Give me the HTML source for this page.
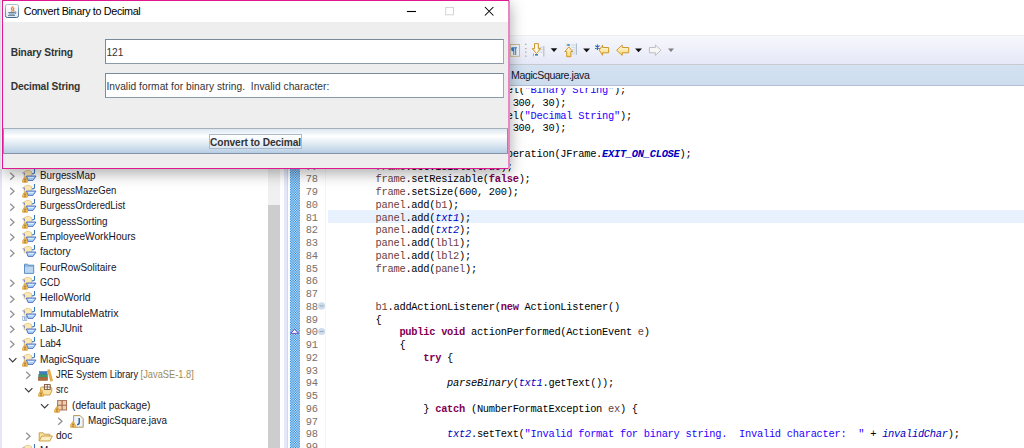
<!DOCTYPE html>
<html lang="en"><head><meta charset="utf-8"><title>Convert Binary to Decimal</title>
<style>
html,body{margin:0;padding:0}
body{width:1024px;height:448px;overflow:hidden;position:relative;background:#fff;font-family:"Liberation Sans",sans-serif}
.abs{position:absolute}
#left{position:absolute;left:0;top:0;width:281px;height:448px;background:#fff;overflow:hidden}
#leftedge{position:absolute;left:0;top:0;width:1.5px;height:448px;background:#e4e6f6}
.tr{position:absolute;font-size:10.6px;line-height:15px;height:15px;color:#141428;white-space:nowrap;letter-spacing:0;transform-origin:0 0}
.dec{color:#9a8a5a}
.ch,.ic{position:absolute}
#sbtrack{position:absolute;left:268px;top:0;width:12px;height:448px;background:#f0f0f0}
#sbthumb{position:absolute;left:268px;top:205px;width:12px;height:243px;background:#cdcdcd}
#sash{position:absolute;left:283.5px;top:0;width:3.8px;height:448px;background:#e4e8f8;border-right:0.7px solid #d8d8dc}
#ruler{position:absolute;left:289.7px;top:86px;width:10.3px;height:362px;background:#5b9bd8;
  background-image:conic-gradient(#eef6fd 25%, #0a7ad8 0 50%, #eef6fd 0 75%, #0a7ad8 0);background-size:1.7px 1.7px}
#rulerline{position:absolute;left:325px;top:86px;width:1px;height:362px;background:#f6f6f6}
.ln{position:absolute;left:299.3px;width:18.4px;text-align:right;font-family:"Liberation Mono",monospace;font-size:10.4px;letter-spacing:-0.24px;line-height:12.75px;height:12.75px;color:#7a7068;white-space:pre}
.cl{position:absolute;left:327.9px;font-family:"Liberation Mono",monospace;font-size:10.4px;letter-spacing:-0.276px;line-height:12.75px;height:12.75px;color:#000;white-space:pre}
.k{color:#7f0055;font-weight:bold}
.l{color:#6a3e3e}
.f{color:#0000c0;font-style:italic}
.sf{color:#0000c0;font-style:italic;font-weight:bold}
.sm{font-style:italic}
.s{color:#2a00ff}
#curline{position:absolute;left:328px;top:210.3px;width:696px;height:12.8px;background:#e8f2fe}
#toolbar{position:absolute;left:284px;top:35px;width:740px;height:29.5px;background:linear-gradient(#f7f8fd,#e4e7f7);border-top:1px solid #efefef;box-sizing:border-box}
#tabbar{position:absolute;left:284px;top:64px;width:740px;height:22px;background:linear-gradient(#d3e1f1,#cedded);border-top:1px solid #c9c9d2;border-bottom:1px solid #b3bfd9;box-sizing:border-box}
#tabtxt{position:absolute;left:511px;top:67.5px;font-size:10.6px;line-height:15px;color:#141428;letter-spacing:-0.4px;white-space:nowrap}
#dlg{position:absolute;left:1.6px;top:-0.3px;width:505.8px;height:166.8px;border:1.2px solid #e0188f;background:#eeeeee;box-shadow:1px 3.5px 14px rgba(0,0,0,0.34)}
#dl{position:absolute;left:0;top:0;width:0;height:0}
#ttl{position:absolute;left:2.8px;top:0.9px;width:505.2px;height:21.1px;background:#fff}
#ttltxt{position:absolute;left:23.7px;top:4.4px;font-size:10.8px;line-height:15px;color:#000;letter-spacing:-0.35px;white-space:nowrap}
.lbl{position:absolute;left:10.7px;font-weight:bold;font-size:10.2px;line-height:14px;color:#333;white-space:nowrap;letter-spacing:-0.13px}
.tf{position:absolute;left:104.8px;width:396.8px;height:23px;border:1px solid #7a8a99;border-right-color:#9aa8b6;border-bottom-color:#8c9aa8;background:#fff;font-size:10.2px;line-height:26.4px;color:#333;white-space:nowrap;padding-left:0.6px;overflow:hidden;letter-spacing:0.05px}
#btn{position:absolute;left:2.8px;top:128.1px;width:505.4px;height:25.6px;border:1px solid #8494a4;border-top:1.4px solid #a6b0bb;box-sizing:border-box;
 background:linear-gradient(#dde7f1 0%,#ffffff 30%,#e4edf5 58%,#b8cee4 100%)}
#btntxt{position:absolute;left:209px;top:134.2px;width:92.6px;height:14.4px;border:1px solid #a9bbcd;box-sizing:border-box;font-weight:bold;font-size:10.2px;line-height:15.6px;color:#333;text-align:center;white-space:nowrap;letter-spacing:-0.1px;background:rgba(255,255,255,0.25)}
</style></head><body>
<div id="left">
<svg class="ch" style="left:9.0px;top:172.05px" width="7" height="9" viewBox="0 0 7 9"><path d="M1.2 0.8 L5 4.3 L1.2 7.8" fill="none" stroke="#919191" stroke-width="1.3"/></svg>
<svg class="ic" style="left:22.0px;top:168.85px" width="15" height="14" viewBox="0 0 15 14"><path d="M2.2 7.8 v-5 q0 -0.6 0.8 -0.6 h0.6 l0.5 -0.8 h3.4 l0.5 0.8 h1 q0.6 0 0.6 0.6 v5z" fill="#fbe9b4" stroke="#e2c078" stroke-width="0.7"/><path d="M0.4 3.9 h2 v2.4" fill="none" stroke="#6a78c0" stroke-width="0.8"/><path d="M4.4 7 h9.6 l-3 4.4 h-5z" fill="#a9d2f8" stroke="#4a68c0" stroke-width="0.9" stroke-linejoin="round"/><path d="M6.2 8.6 h5.6" stroke="#e8f4ff" stroke-width="0.9"/><path d="M12.5 -0.2 v3.6 q0 1.6 -2.6 1.5" fill="none" stroke="#3a78b8" stroke-width="1.1"/><path d="M3 7.6 Q3.8 7.6 5.6 11.6 Q6.4 13.4 4.6 13.4 H1.4 Q-0.4 13.4 0.4 11.6 Q2.2 7.6 3 7.6 Z" fill="#f0bc5c" stroke="#d8982c" stroke-width="0.6"/><rect x="2.6" y="9.6" width="0.8" height="1.9" fill="#5a3a00"/><rect x="2.6" y="12" width="0.8" height="0.8" fill="#5a3a00"/></svg>
<div class="tr" style="left:40.2px;top:167.85px;transform:scaleX(0.9330)">BurgessMap</div>
<svg class="ch" style="left:9.0px;top:187.36px" width="7" height="9" viewBox="0 0 7 9"><path d="M1.2 0.8 L5 4.3 L1.2 7.8" fill="none" stroke="#919191" stroke-width="1.3"/></svg>
<svg class="ic" style="left:22.0px;top:184.16px" width="15" height="14" viewBox="0 0 15 14"><path d="M2.2 7.8 v-5 q0 -0.6 0.8 -0.6 h0.6 l0.5 -0.8 h3.4 l0.5 0.8 h1 q0.6 0 0.6 0.6 v5z" fill="#fbe9b4" stroke="#e2c078" stroke-width="0.7"/><path d="M0.4 3.9 h2 v2.4" fill="none" stroke="#6a78c0" stroke-width="0.8"/><path d="M4.4 7 h9.6 l-3 4.4 h-5z" fill="#a9d2f8" stroke="#4a68c0" stroke-width="0.9" stroke-linejoin="round"/><path d="M6.2 8.6 h5.6" stroke="#e8f4ff" stroke-width="0.9"/><path d="M12.5 -0.2 v3.6 q0 1.6 -2.6 1.5" fill="none" stroke="#3a78b8" stroke-width="1.1"/><path d="M3 7.6 Q3.8 7.6 5.6 11.6 Q6.4 13.4 4.6 13.4 H1.4 Q-0.4 13.4 0.4 11.6 Q2.2 7.6 3 7.6 Z" fill="#f0bc5c" stroke="#d8982c" stroke-width="0.6"/><rect x="2.6" y="9.6" width="0.8" height="1.9" fill="#5a3a00"/><rect x="2.6" y="12" width="0.8" height="0.8" fill="#5a3a00"/></svg>
<div class="tr" style="left:40.2px;top:183.16px;transform:scaleX(0.9000)">BurgessMazeGen</div>
<svg class="ch" style="left:9.0px;top:202.67px" width="7" height="9" viewBox="0 0 7 9"><path d="M1.2 0.8 L5 4.3 L1.2 7.8" fill="none" stroke="#919191" stroke-width="1.3"/></svg>
<svg class="ic" style="left:22.0px;top:199.47px" width="15" height="14" viewBox="0 0 15 14"><path d="M2.2 7.8 v-5 q0 -0.6 0.8 -0.6 h0.6 l0.5 -0.8 h3.4 l0.5 0.8 h1 q0.6 0 0.6 0.6 v5z" fill="#fbe9b4" stroke="#e2c078" stroke-width="0.7"/><path d="M0.4 3.9 h2 v2.4" fill="none" stroke="#6a78c0" stroke-width="0.8"/><path d="M4.4 7 h9.6 l-3 4.4 h-5z" fill="#a9d2f8" stroke="#4a68c0" stroke-width="0.9" stroke-linejoin="round"/><path d="M6.2 8.6 h5.6" stroke="#e8f4ff" stroke-width="0.9"/><path d="M12.5 -0.2 v3.6 q0 1.6 -2.6 1.5" fill="none" stroke="#3a78b8" stroke-width="1.1"/><path d="M3 7.6 Q3.8 7.6 5.6 11.6 Q6.4 13.4 4.6 13.4 H1.4 Q-0.4 13.4 0.4 11.6 Q2.2 7.6 3 7.6 Z" fill="#f0bc5c" stroke="#d8982c" stroke-width="0.6"/><rect x="2.6" y="9.6" width="0.8" height="1.9" fill="#5a3a00"/><rect x="2.6" y="12" width="0.8" height="0.8" fill="#5a3a00"/></svg>
<div class="tr" style="left:40.2px;top:198.47px;transform:scaleX(0.9043)">BurgessOrderedList</div>
<svg class="ch" style="left:9.0px;top:217.98px" width="7" height="9" viewBox="0 0 7 9"><path d="M1.2 0.8 L5 4.3 L1.2 7.8" fill="none" stroke="#919191" stroke-width="1.3"/></svg>
<svg class="ic" style="left:22.0px;top:214.78px" width="15" height="14" viewBox="0 0 15 14"><path d="M2.2 7.8 v-5 q0 -0.6 0.8 -0.6 h0.6 l0.5 -0.8 h3.4 l0.5 0.8 h1 q0.6 0 0.6 0.6 v5z" fill="#fbe9b4" stroke="#e2c078" stroke-width="0.7"/><path d="M0.4 3.9 h2 v2.4" fill="none" stroke="#6a78c0" stroke-width="0.8"/><path d="M4.4 7 h9.6 l-3 4.4 h-5z" fill="#a9d2f8" stroke="#4a68c0" stroke-width="0.9" stroke-linejoin="round"/><path d="M6.2 8.6 h5.6" stroke="#e8f4ff" stroke-width="0.9"/><path d="M12.5 -0.2 v3.6 q0 1.6 -2.6 1.5" fill="none" stroke="#3a78b8" stroke-width="1.1"/><path d="M3 7.6 Q3.8 7.6 5.6 11.6 Q6.4 13.4 4.6 13.4 H1.4 Q-0.4 13.4 0.4 11.6 Q2.2 7.6 3 7.6 Z" fill="#f0bc5c" stroke="#d8982c" stroke-width="0.6"/><rect x="2.6" y="9.6" width="0.8" height="1.9" fill="#5a3a00"/><rect x="2.6" y="12" width="0.8" height="0.8" fill="#5a3a00"/></svg>
<div class="tr" style="left:40.2px;top:213.78px;transform:scaleX(0.9331)">BurgessSorting</div>
<svg class="ch" style="left:9.0px;top:233.29px" width="7" height="9" viewBox="0 0 7 9"><path d="M1.2 0.8 L5 4.3 L1.2 7.8" fill="none" stroke="#919191" stroke-width="1.3"/></svg>
<svg class="ic" style="left:22.0px;top:230.09px" width="15" height="14" viewBox="0 0 15 14"><path d="M2.2 7.8 v-5 q0 -0.6 0.8 -0.6 h0.6 l0.5 -0.8 h3.4 l0.5 0.8 h1 q0.6 0 0.6 0.6 v5z" fill="#fbe9b4" stroke="#e2c078" stroke-width="0.7"/><path d="M0.4 3.9 h2 v2.4" fill="none" stroke="#6a78c0" stroke-width="0.8"/><path d="M4.4 7 h9.6 l-3 4.4 h-5z" fill="#a9d2f8" stroke="#4a68c0" stroke-width="0.9" stroke-linejoin="round"/><path d="M6.2 8.6 h5.6" stroke="#e8f4ff" stroke-width="0.9"/><path d="M12.5 -0.2 v3.6 q0 1.6 -2.6 1.5" fill="none" stroke="#3a78b8" stroke-width="1.1"/><path d="M3 7.6 Q3.8 7.6 5.6 11.6 Q6.4 13.4 4.6 13.4 H1.4 Q-0.4 13.4 0.4 11.6 Q2.2 7.6 3 7.6 Z" fill="#f0bc5c" stroke="#d8982c" stroke-width="0.6"/><rect x="2.6" y="9.6" width="0.8" height="1.9" fill="#5a3a00"/><rect x="2.6" y="12" width="0.8" height="0.8" fill="#5a3a00"/></svg>
<div class="tr" style="left:40.2px;top:229.09px;transform:scaleX(0.9571)">EmployeeWorkHours</div>
<svg class="ch" style="left:9.0px;top:248.60px" width="7" height="9" viewBox="0 0 7 9"><path d="M1.2 0.8 L5 4.3 L1.2 7.8" fill="none" stroke="#919191" stroke-width="1.3"/></svg>
<svg class="ic" style="left:22.0px;top:245.40px" width="15" height="14" viewBox="0 0 15 14"><path d="M2.2 7.8 v-5 q0 -0.6 0.8 -0.6 h0.6 l0.5 -0.8 h3.4 l0.5 0.8 h1 q0.6 0 0.6 0.6 v5z" fill="#fbe9b4" stroke="#e2c078" stroke-width="0.7"/><path d="M0.4 3.9 h2 v2.4" fill="none" stroke="#6a78c0" stroke-width="0.8"/><path d="M4.4 7 h9.6 l-3 4.4 h-5z" fill="#a9d2f8" stroke="#4a68c0" stroke-width="0.9" stroke-linejoin="round"/><path d="M6.2 8.6 h5.6" stroke="#e8f4ff" stroke-width="0.9"/><path d="M12.5 -0.2 v3.6 q0 1.6 -2.6 1.5" fill="none" stroke="#3a78b8" stroke-width="1.1"/></svg>
<div class="tr" style="left:40.2px;top:244.40px;transform:scaleX(0.9656)">factory</div>
<svg class="ic" style="left:22.0px;top:260.71px" width="15" height="14" viewBox="0 0 15 14"><path d="M2.5 3.2 h3.2 l0.8 1 h5.2 v8.2 h-9.2z" fill="#bcd6f2" stroke="#4f86c0" stroke-width="0.9"/><path d="M2.5 5 h9.2" stroke="#4f86c0" stroke-width="0.7"/></svg>
<div class="tr" style="left:40.2px;top:259.71px;transform:scaleX(0.9406)">FourRowSolitaire</div>
<svg class="ch" style="left:9.0px;top:279.22px" width="7" height="9" viewBox="0 0 7 9"><path d="M1.2 0.8 L5 4.3 L1.2 7.8" fill="none" stroke="#919191" stroke-width="1.3"/></svg>
<svg class="ic" style="left:22.0px;top:276.02px" width="15" height="14" viewBox="0 0 15 14"><path d="M2.2 7.8 v-5 q0 -0.6 0.8 -0.6 h0.6 l0.5 -0.8 h3.4 l0.5 0.8 h1 q0.6 0 0.6 0.6 v5z" fill="#fbe9b4" stroke="#e2c078" stroke-width="0.7"/><path d="M0.4 3.9 h2 v2.4" fill="none" stroke="#6a78c0" stroke-width="0.8"/><path d="M4.4 7 h9.6 l-3 4.4 h-5z" fill="#a9d2f8" stroke="#4a68c0" stroke-width="0.9" stroke-linejoin="round"/><path d="M6.2 8.6 h5.6" stroke="#e8f4ff" stroke-width="0.9"/><path d="M12.5 -0.2 v3.6 q0 1.6 -2.6 1.5" fill="none" stroke="#3a78b8" stroke-width="1.1"/><path d="M3 7.6 Q3.8 7.6 5.6 11.6 Q6.4 13.4 4.6 13.4 H1.4 Q-0.4 13.4 0.4 11.6 Q2.2 7.6 3 7.6 Z" fill="#f0bc5c" stroke="#d8982c" stroke-width="0.6"/><rect x="2.6" y="9.6" width="0.8" height="1.9" fill="#5a3a00"/><rect x="2.6" y="12" width="0.8" height="0.8" fill="#5a3a00"/></svg>
<div class="tr" style="left:40.2px;top:275.02px;transform:scaleX(0.8522)">GCD</div>
<svg class="ch" style="left:9.0px;top:294.53px" width="7" height="9" viewBox="0 0 7 9"><path d="M1.2 0.8 L5 4.3 L1.2 7.8" fill="none" stroke="#919191" stroke-width="1.3"/></svg>
<svg class="ic" style="left:22.0px;top:291.33px" width="15" height="14" viewBox="0 0 15 14"><path d="M2.2 7.8 v-5 q0 -0.6 0.8 -0.6 h0.6 l0.5 -0.8 h3.4 l0.5 0.8 h1 q0.6 0 0.6 0.6 v5z" fill="#fbe9b4" stroke="#e2c078" stroke-width="0.7"/><path d="M0.4 3.9 h2 v2.4" fill="none" stroke="#6a78c0" stroke-width="0.8"/><path d="M4.4 7 h9.6 l-3 4.4 h-5z" fill="#a9d2f8" stroke="#4a68c0" stroke-width="0.9" stroke-linejoin="round"/><path d="M6.2 8.6 h5.6" stroke="#e8f4ff" stroke-width="0.9"/><path d="M12.5 -0.2 v3.6 q0 1.6 -2.6 1.5" fill="none" stroke="#3a78b8" stroke-width="1.1"/></svg>
<div class="tr" style="left:40.2px;top:290.33px;transform:scaleX(0.9804)">HelloWorld</div>
<svg class="ch" style="left:9.0px;top:309.84px" width="7" height="9" viewBox="0 0 7 9"><path d="M1.2 0.8 L5 4.3 L1.2 7.8" fill="none" stroke="#919191" stroke-width="1.3"/></svg>
<svg class="ic" style="left:22.0px;top:306.64px" width="15" height="14" viewBox="0 0 15 14"><path d="M2.2 7.8 v-5 q0 -0.6 0.8 -0.6 h0.6 l0.5 -0.8 h3.4 l0.5 0.8 h1 q0.6 0 0.6 0.6 v5z" fill="#fbe9b4" stroke="#e2c078" stroke-width="0.7"/><path d="M0.4 3.9 h2 v2.4" fill="none" stroke="#6a78c0" stroke-width="0.8"/><path d="M4.4 7 h9.6 l-3 4.4 h-5z" fill="#a9d2f8" stroke="#4a68c0" stroke-width="0.9" stroke-linejoin="round"/><path d="M6.2 8.6 h5.6" stroke="#e8f4ff" stroke-width="0.9"/><path d="M12.5 -0.2 v3.6 q0 1.6 -2.6 1.5" fill="none" stroke="#3a78b8" stroke-width="1.1"/><rect x="0.8" y="9.2" width="4" height="4.2" fill="#fff" stroke="#6b8fc0" stroke-width="0.6"/><rect x="2.5" y="10" width="0.8" height="2.8" fill="#2d5fa8"/></svg>
<div class="tr" style="left:40.2px;top:305.64px;transform:scaleX(1.0032)">ImmutableMatrix</div>
<svg class="ch" style="left:9.0px;top:325.15px" width="7" height="9" viewBox="0 0 7 9"><path d="M1.2 0.8 L5 4.3 L1.2 7.8" fill="none" stroke="#919191" stroke-width="1.3"/></svg>
<svg class="ic" style="left:22.0px;top:321.95px" width="15" height="14" viewBox="0 0 15 14"><path d="M2.2 7.8 v-5 q0 -0.6 0.8 -0.6 h0.6 l0.5 -0.8 h3.4 l0.5 0.8 h1 q0.6 0 0.6 0.6 v5z" fill="#fbe9b4" stroke="#e2c078" stroke-width="0.7"/><path d="M0.4 3.9 h2 v2.4" fill="none" stroke="#6a78c0" stroke-width="0.8"/><path d="M4.4 7 h9.6 l-3 4.4 h-5z" fill="#a9d2f8" stroke="#4a68c0" stroke-width="0.9" stroke-linejoin="round"/><path d="M6.2 8.6 h5.6" stroke="#e8f4ff" stroke-width="0.9"/><path d="M12.5 -0.2 v3.6 q0 1.6 -2.6 1.5" fill="none" stroke="#3a78b8" stroke-width="1.1"/></svg>
<div class="tr" style="left:40.2px;top:320.95px;transform:scaleX(0.9311)">Lab-JUnit</div>
<svg class="ch" style="left:9.0px;top:340.46px" width="7" height="9" viewBox="0 0 7 9"><path d="M1.2 0.8 L5 4.3 L1.2 7.8" fill="none" stroke="#919191" stroke-width="1.3"/></svg>
<svg class="ic" style="left:22.0px;top:337.26px" width="15" height="14" viewBox="0 0 15 14"><path d="M2.2 7.8 v-5 q0 -0.6 0.8 -0.6 h0.6 l0.5 -0.8 h3.4 l0.5 0.8 h1 q0.6 0 0.6 0.6 v5z" fill="#fbe9b4" stroke="#e2c078" stroke-width="0.7"/><path d="M0.4 3.9 h2 v2.4" fill="none" stroke="#6a78c0" stroke-width="0.8"/><path d="M4.4 7 h9.6 l-3 4.4 h-5z" fill="#a9d2f8" stroke="#4a68c0" stroke-width="0.9" stroke-linejoin="round"/><path d="M6.2 8.6 h5.6" stroke="#e8f4ff" stroke-width="0.9"/><path d="M12.5 -0.2 v3.6 q0 1.6 -2.6 1.5" fill="none" stroke="#3a78b8" stroke-width="1.1"/><path d="M3 7.6 Q3.8 7.6 5.6 11.6 Q6.4 13.4 4.6 13.4 H1.4 Q-0.4 13.4 0.4 11.6 Q2.2 7.6 3 7.6 Z" fill="#f0bc5c" stroke="#d8982c" stroke-width="0.6"/><rect x="2.6" y="9.6" width="0.8" height="1.9" fill="#5a3a00"/><rect x="2.6" y="12" width="0.8" height="0.8" fill="#5a3a00"/></svg>
<div class="tr" style="left:40.2px;top:336.26px;transform:scaleX(0.8957)">Lab4</div>
<svg class="ch" style="left:7.5px;top:356.57px" width="10" height="7" viewBox="0 0 10 7"><path d="M1 1.2 L4.7 5 L8.4 1.2" fill="none" stroke="#3c3c3c" stroke-width="1.2"/></svg>
<svg class="ic" style="left:22.0px;top:352.57px" width="15" height="14" viewBox="0 0 15 14"><path d="M2.2 7.8 v-5 q0 -0.6 0.8 -0.6 h0.6 l0.5 -0.8 h3.4 l0.5 0.8 h1 q0.6 0 0.6 0.6 v5z" fill="#fbe9b4" stroke="#e2c078" stroke-width="0.7"/><path d="M0.4 3.9 h2 v2.4" fill="none" stroke="#6a78c0" stroke-width="0.8"/><path d="M4.4 7 h9.6 l-3 4.4 h-5z" fill="#a9d2f8" stroke="#4a68c0" stroke-width="0.9" stroke-linejoin="round"/><path d="M6.2 8.6 h5.6" stroke="#e8f4ff" stroke-width="0.9"/><path d="M12.5 -0.2 v3.6 q0 1.6 -2.6 1.5" fill="none" stroke="#3a78b8" stroke-width="1.1"/><path d="M3 7.6 Q3.8 7.6 5.6 11.6 Q6.4 13.4 4.6 13.4 H1.4 Q-0.4 13.4 0.4 11.6 Q2.2 7.6 3 7.6 Z" fill="#f0bc5c" stroke="#d8982c" stroke-width="0.6"/><rect x="2.6" y="9.6" width="0.8" height="1.9" fill="#5a3a00"/><rect x="2.6" y="12" width="0.8" height="0.8" fill="#5a3a00"/></svg>
<div class="tr" style="left:40.2px;top:351.57px;transform:scaleX(0.9590)">MagicSquare</div>
<svg class="ch" style="left:25.0px;top:371.08px" width="7" height="9" viewBox="0 0 7 9"><path d="M1.2 0.8 L5 4.3 L1.2 7.8" fill="none" stroke="#919191" stroke-width="1.3"/></svg>
<svg class="ic" style="left:38.0px;top:367.88px" width="15" height="14" viewBox="0 0 15 14"><rect x="1.5" y="3.6" width="7.6" height="2.6" fill="#3d7fc4" stroke="#2a5d98" stroke-width="0.5"/><rect x="0.8" y="6.4" width="8.6" height="2.8" fill="#3f9a72" stroke="#2c7554" stroke-width="0.5"/><rect x="0.4" y="9.4" width="9.2" height="3" fill="#b26a3c" stroke="#8a4c24" stroke-width="0.5"/><path d="M9.6 2.2 l2 -0.6 l3 11 l-2 0.6z" fill="#f0b44a" stroke="#c98a1e" stroke-width="0.5"/></svg>
<div class="tr" style="left:56.2px;top:366.88px;transform:scaleX(0.8764)">JRE System Library <span class="dec">[JavaSE-1.8]</span></div>
<svg class="ch" style="left:23.5px;top:387.19px" width="10" height="7" viewBox="0 0 10 7"><path d="M1 1.2 L4.7 5 L8.4 1.2" fill="none" stroke="#3c3c3c" stroke-width="1.2"/></svg>
<svg class="ic" style="left:38.0px;top:383.19px" width="15" height="14" viewBox="0 0 15 14"><path d="M3.4 4 h9 q1.4 0 1.4 1.6 v2.6 l-2 3.8 h-9.4 l2 -4.2 h-2 q0 -3.8 1 -3.8z" fill="#f6e0a0" stroke="#c9963a" stroke-width="0.9"/><rect x="6.4" y="1.6" width="5.8" height="4.8" fill="#fff" stroke="#7a4a32" stroke-width="0.9"/><path d="M9.3 1.6 v4.8 M6.4 4 h5.8" stroke="#7a4a32" stroke-width="0.8"/><path d="M3 7.6 Q3.8 7.6 5.6 11.6 Q6.4 13.4 4.6 13.4 H1.4 Q-0.4 13.4 0.4 11.6 Q2.2 7.6 3 7.6 Z" fill="#f0bc5c" stroke="#d8982c" stroke-width="0.6"/><rect x="2.6" y="9.6" width="0.8" height="1.9" fill="#5a3a00"/><rect x="2.6" y="12" width="0.8" height="0.8" fill="#5a3a00"/></svg>
<div class="tr" style="left:56.2px;top:382.19px;transform:scaleX(0.8714)">src</div>
<svg class="ch" style="left:39.5px;top:402.50px" width="10" height="7" viewBox="0 0 10 7"><path d="M1 1.2 L4.7 5 L8.4 1.2" fill="none" stroke="#3c3c3c" stroke-width="1.2"/></svg>
<svg class="ic" style="left:54.0px;top:398.50px" width="15" height="14" viewBox="0 0 15 14"><rect x="3.6" y="1.6" width="9" height="9.4" fill="#ecd0b0" stroke="#a4674a" stroke-width="0.9"/><path d="M8.1 1.6 v9.4 M3.6 6.3 h9" stroke="#a4674a" stroke-width="1.1"/><path d="M3 7.6 Q3.8 7.6 5.6 11.6 Q6.4 13.4 4.6 13.4 H1.4 Q-0.4 13.4 0.4 11.6 Q2.2 7.6 3 7.6 Z" fill="#f0bc5c" stroke="#d8982c" stroke-width="0.6"/><rect x="2.6" y="9.6" width="0.8" height="1.9" fill="#5a3a00"/><rect x="2.6" y="12" width="0.8" height="0.8" fill="#5a3a00"/></svg>
<div class="tr" style="left:72.2px;top:397.50px;transform:scaleX(0.9580)">(default package)</div>
<svg class="ch" style="left:57.0px;top:417.01px" width="7" height="9" viewBox="0 0 7 9"><path d="M1.2 0.8 L5 4.3 L1.2 7.8" fill="none" stroke="#919191" stroke-width="1.3"/></svg>
<svg class="ic" style="left:70.0px;top:413.81px" width="15" height="14" viewBox="0 0 15 14"><path d="M3.6 1.6 h6.6 l3 3 v8.6 h-9.6z" fill="#eef4fc" stroke="#b08a3e" stroke-width="0.9"/><path d="M9.2 4 v5 q0 1.6 -2.2 1.4" fill="none" stroke="#2d5fa8" stroke-width="1.5"/><path d="M3 7.6 Q3.8 7.6 5.6 11.6 Q6.4 13.4 4.6 13.4 H1.4 Q-0.4 13.4 0.4 11.6 Q2.2 7.6 3 7.6 Z" fill="#f0bc5c" stroke="#d8982c" stroke-width="0.6"/><rect x="2.6" y="9.6" width="0.8" height="1.9" fill="#5a3a00"/><rect x="2.6" y="12" width="0.8" height="0.8" fill="#5a3a00"/></svg>
<div class="tr" style="left:88.2px;top:412.81px;transform:scaleX(0.9310)">MagicSquare.java</div>
<svg class="ch" style="left:25.0px;top:432.32px" width="7" height="9" viewBox="0 0 7 9"><path d="M1.2 0.8 L5 4.3 L1.2 7.8" fill="none" stroke="#919191" stroke-width="1.3"/></svg>
<svg class="ic" style="left:38.0px;top:429.12px" width="15" height="14" viewBox="0 0 15 14"><path d="M1.2 12 v-8.2 h4 l1 1.4 h5.6 v2" fill="#f7e3a8" stroke="#c9963a" stroke-width="0.9"/><path d="M1.2 12 l2.6 -5 h10.6 l-2.6 5z" fill="#fbeec0" stroke="#c9963a" stroke-width="0.9"/></svg>
<div class="tr" style="left:56.2px;top:428.12px;transform:scaleX(0.9529)">doc</div>
<svg class="ch" style="left:9.0px;top:447.63px" width="7" height="9" viewBox="0 0 7 9"><path d="M1.2 0.8 L5 4.3 L1.2 7.8" fill="none" stroke="#919191" stroke-width="1.3"/></svg>
<svg class="ic" style="left:22.0px;top:444.43px" width="15" height="14" viewBox="0 0 15 14"><path d="M2.2 7.8 v-5 q0 -0.6 0.8 -0.6 h0.6 l0.5 -0.8 h3.4 l0.5 0.8 h1 q0.6 0 0.6 0.6 v5z" fill="#fbe9b4" stroke="#e2c078" stroke-width="0.7"/><path d="M0.4 3.9 h2 v2.4" fill="none" stroke="#6a78c0" stroke-width="0.8"/><path d="M4.4 7 h9.6 l-3 4.4 h-5z" fill="#a9d2f8" stroke="#4a68c0" stroke-width="0.9" stroke-linejoin="round"/><path d="M6.2 8.6 h5.6" stroke="#e8f4ff" stroke-width="0.9"/><path d="M12.5 -0.2 v3.6 q0 1.6 -2.6 1.5" fill="none" stroke="#3a78b8" stroke-width="1.1"/><path d="M3 7.6 Q3.8 7.6 5.6 11.6 Q6.4 13.4 4.6 13.4 H1.4 Q-0.4 13.4 0.4 11.6 Q2.2 7.6 3 7.6 Z" fill="#f0bc5c" stroke="#d8982c" stroke-width="0.6"/><rect x="2.6" y="9.6" width="0.8" height="1.9" fill="#5a3a00"/><rect x="2.6" y="12" width="0.8" height="0.8" fill="#5a3a00"/></svg>
<div class="tr" style="left:40.2px;top:443.43px;transform:scaleX(0.9300)">M</div>
<div id="sbtrack"></div><div id="sbthumb"></div>
<div id="leftedge"></div>
</div>
<div id="sash"></div>
<div id="curline"></div>
<div id="ruler"></div><div id="rulerline"></div>
<div class="ln" style="top:84.07px">71</div>
<div class="ln" style="top:96.82px">72</div>
<div class="ln" style="top:109.57px">73</div>
<div class="ln" style="top:122.32px">74</div>
<div class="ln" style="top:135.07px">75</div>
<div class="ln" style="top:147.82px">76</div>
<div class="ln" style="top:160.57px">77</div>
<div class="ln" style="top:173.32px">78</div>
<div class="ln" style="top:186.07px">79</div>
<div class="ln" style="top:198.82px">80</div>
<div class="ln" style="top:211.57px">81</div>
<div class="ln" style="top:224.32px">82</div>
<div class="ln" style="top:237.07px">83</div>
<div class="ln" style="top:249.82px">84</div>
<div class="ln" style="top:262.57px">85</div>
<div class="ln" style="top:275.32px">86</div>
<div class="ln" style="top:288.07px">87</div>
<div class="ln" style="top:300.82px">88</div>
<div class="ln" style="top:313.57px">89</div>
<div class="ln" style="top:326.32px">90</div>
<div class="ln" style="top:339.07px">91</div>
<div class="ln" style="top:351.82px">92</div>
<div class="ln" style="top:364.57px">93</div>
<div class="ln" style="top:377.32px">94</div>
<div class="ln" style="top:390.07px">95</div>
<div class="ln" style="top:402.82px">96</div>
<div class="ln" style="top:415.57px">97</div>
<div class="ln" style="top:428.32px">98</div>
<div class="ln" style="top:441.07px">99</div>
<div class="cl" style="top:84.07px">        JLabel <span class="l">lbl1</span> = <span class="k">new</span> JLabel(<span class="s">"Binary String"</span>);</div>
<div class="cl" style="top:96.82px">        <span class="l">lbl1</span>.setBounds(10, 10, 300, 30);</div>
<div class="cl" style="top:109.57px">        JLabel <span class="l">lbl2</span> = <span class="k">new</span> JLabel(<span class="s">"Decimal String"</span>);</div>
<div class="cl" style="top:122.32px">        <span class="l">lbl2</span>.setBounds(10, 50, 300, 30);</div>
<div class="cl" style="top:147.82px">        <span class="l">frame</span>.setDefaultCloseOperation(JFrame.<span class="sf">EXIT_ON_CLOSE</span>);</div>
<div class="cl" style="top:160.57px">        <span class="l">frame</span>.setVisible(<span class="k">true</span>);</div>
<div class="cl" style="top:173.32px">        <span class="l">frame</span>.setResizable(<span class="k">false</span>);</div>
<div class="cl" style="top:186.07px">        <span class="l">frame</span>.setSize(600, 200);</div>
<div class="cl" style="top:198.82px">        <span class="l">panel</span>.add(<span class="l">b1</span>);</div>
<div class="cl" style="top:211.57px">        <span class="l">panel</span>.add(<span class="f">txt1</span>);</div>
<div class="cl" style="top:224.32px">        <span class="l">panel</span>.add(<span class="f">txt2</span>);</div>
<div class="cl" style="top:237.07px">        <span class="l">panel</span>.add(<span class="l">lbl1</span>);</div>
<div class="cl" style="top:249.82px">        <span class="l">panel</span>.add(<span class="l">lbl2</span>);</div>
<div class="cl" style="top:262.57px">        <span class="l">frame</span>.add(<span class="l">panel</span>);</div>
<div class="cl" style="top:300.82px">        <span class="l">b1</span>.addActionListener(<span class="k">new</span> ActionListener()</div>
<div class="cl" style="top:313.57px">        {</div>
<div class="cl" style="top:326.32px">            <span class="k">public</span> <span class="k">void</span> actionPerformed(ActionEvent <span class="l">e</span>)</div>
<div class="cl" style="top:339.07px">            {</div>
<div class="cl" style="top:351.82px">                <span class="k">try</span> {</div>
<div class="cl" style="top:377.32px">                    <span class="sm">parseBinary</span>(<span class="f">txt1</span>.getText());</div>
<div class="cl" style="top:402.82px">                } <span class="k">catch</span> (NumberFormatException <span class="l">ex</span>) {</div>
<div class="cl" style="top:428.32px">                    <span class="f">txt2</span>.setText(<span class="s">"Invalid format for binary string.  Invalid character:  "</span> + <span class="f">invalidChar</span>);</div>
<div id="toolbar"></div>
<div id="tabbar"></div>
<div id="tabtxt">MagicSquare.java</div>
<svg class="abs" style="left:500px;top:36px" width="200" height="30" viewBox="500 36 200 30">
<defs>
<linearGradient id="ga" x1="0" y1="0" x2="0" y2="1"><stop offset="0" stop-color="#fffdf2"/><stop offset="1" stop-color="#f8d566"/></linearGradient>
<linearGradient id="gb" x1="0" y1="0" x2="1" y2="0"><stop offset="0" stop-color="#fbe08a"/><stop offset="0.5" stop-color="#fffdf4"/><stop offset="1" stop-color="#f9d568"/></linearGradient>
</defs>
<rect x="510.2" y="44.5" width="9.2" height="11.8" fill="#f5f7fb" stroke="#c7b685" stroke-width="0.9"/>
<path d="M512 47.2 h5 v1 h-0.8 v6.8 h-1 v-6.8 h-0.9 v6.8 h-1 v-3.6 q-2.2 0 -2.2 -2.1 q0 -2.1 0.9 -2.1z" fill="#3b82c8"/>
<g fill="#b0a58a"><rect x="525.1" y="43.8" width="1.4" height="1.1"/><rect x="525.1" y="48.1" width="1.4" height="1.1"/><rect x="525.1" y="51.6" width="1.4" height="1.1"/><rect x="525.1" y="55.6" width="1.4" height="1.1"/></g>
<rect x="533.2" y="46" width="11.2" height="10.6" fill="#eef2f6"/><rect x="543" y="46" width="1.5" height="10.6" fill="#c4c8cc"/>
<path d="M539.5 47.5 h3 M539.5 49.8 h3 M539.5 52.2 h3" stroke="#c0cce0" stroke-width="0.7"/>
<rect x="533" y="53.6" width="0.7" height="2.8" fill="#7890b0"/><rect x="535" y="54" width="3" height="1.6" fill="#3b7fc4"/>
<path d="M534.5 43.6 h3.9 v5 h2.2 l-4.1 5 l-4.2 -5 h2.2z" fill="url(#gb)" stroke="#c98f1c" stroke-width="0.9" stroke-linejoin="round"/>
<path d="M550.7 48.2 h6.6 l-3.3 3.9z" fill="#111"/>
<rect x="565.6" y="43.4" width="11.2" height="11.4" fill="#eef2f6"/><rect x="575.8" y="43.4" width="1.2" height="11.4" fill="#aebccc"/><rect x="565.6" y="43.4" width="1" height="3" fill="#e0dcc0"/>
<rect x="567.2" y="44.2" width="2.6" height="1.6" fill="#3b7fc4"/><path d="M571 45 h4 M571.5 47.4 h3.4 M572 49.8 h3 M572 52.2 h3 M572 54 h3" stroke="#c0cce0" stroke-width="0.7"/>
<path d="M568.8 46.9 l3.9 4.6 h-1.8 v5.2 h-4.2 v-5.2 h-1.8z" fill="url(#ga)" stroke="#c98f1c" stroke-width="0.9" stroke-linejoin="round"/>
<path d="M583.2 48.4 h6.8 l-3.4 3.8z" fill="#111"/>
<path d="M599.2 50.2 l3.4 -5 v2.3 h6 v5.3 h-6 v2.5z" fill="url(#ga)" stroke="#c98f1c" stroke-width="0.9" stroke-linejoin="round"/>
<path d="M597.4 44.4 v5.6 M595.2 45.6 l4.4 3.2 M599.6 45.6 l-4.4 3.2" stroke="#2f64a8" stroke-width="1.1"/>
<path d="M616.6 50.2 l5.6 -5.2 v2.5 h6.5 v5.3 h-6.5 v2.6z" fill="url(#ga)" stroke="#c98f1c" stroke-width="0.9" stroke-linejoin="round"/>
<path d="M635.1 48.4 h6.9 l-3.45 3.8z" fill="#111"/>
<path d="M661 50.2 l-5.6 -5.2 v2.5 h-6 v5.3 h6 v2.6z" fill="#f6f6f6" stroke="#b9b9b9" stroke-width="0.9" stroke-linejoin="round"/>
<path d="M668 48.4 h6 l-3 3.6z" fill="#808080"/>
</svg>
<div class="abs" style="left:284px;top:86px;width:740px;height:1.6px;background:#fff"></div>
<svg class="abs" style="left:284px;top:296px" width="44" height="44" viewBox="284 296 44 44">
<circle cx="321.6" cy="305.9" r="3.6" fill="#cddcea"/><path d="M319.6 305.9 h4" stroke="#8ea4bc" stroke-width="0.9"/>
<circle cx="321.6" cy="331.5" r="3.6" fill="#cddcea"/><path d="M319.6 331.5 h4" stroke="#8ea4bc" stroke-width="0.9"/>
<path d="M294.6 329.4 L298.6 333.3 H290.6 Z" fill="#fff" stroke="#6a3cb8" stroke-width="0.9" stroke-linejoin="round"/>
</svg>
<div id="dlg"></div>
<div class="abs" style="left:0;top:0;width:1.7px;height:169px;background:linear-gradient(90deg,#d6d9e2,#f2f2f2)"></div>
<div id="dl">
 <div class="abs" style="left:508px;top:1px;width:2px;height:167.5px;background:#eb84c2"></div>
 <div id="ttl"></div>
 <svg class="abs" style="left:0px;top:0px" width="24" height="22" viewBox="0 0 24 22"><defs><linearGradient id="jb" x1="0" y1="0" x2="0" y2="1"><stop offset="0" stop-color="#a9bfd0"/><stop offset="1" stop-color="#3f6a90"/></linearGradient><linearGradient id="jf" x1="0" y1="0" x2="0" y2="1"><stop offset="0" stop-color="#ffffff"/><stop offset="1" stop-color="#e4e8ec"/></linearGradient></defs><rect x="5.4" y="4.5" width="13.1" height="13" rx="1.8" fill="url(#jf)" stroke="url(#jb)" stroke-width="1"/><path d="M13.4 6.6 q-3 1.6 -1.6 3 q1 1 -0.4 2.2 M14.4 8 q-1.8 0.8 -0.8 1.8 q0.6 0.8 -0.4 1.6" fill="none" stroke="#e87a1c" stroke-width="1.1"/><path d="M8.3 12.5 h6.6 M8.9 14 h5.4 M8 15.4 h7" fill="none" stroke="#4f7596" stroke-width="0.9"/><path d="M14.6 11.4 q2.8 0.6 0.2 2.8" fill="none" stroke="#4f7596" stroke-width="0.9"/></svg>
 <div id="ttltxt">Convert Binary to Decimal</div>
 <svg class="abs" style="left:400px;top:0px" width="108" height="22" viewBox="0 0 108 22"><path d="M6.9 11.5 H16" stroke="#000" stroke-width="1.1"/><rect x="45.7" y="7.4" width="7.8" height="7.4" fill="none" stroke="#cfcfcf" stroke-width="0.9"/><path d="M84.9 7 L93.4 15.5 M93.4 7 L84.9 15.5" stroke="#000" stroke-width="1.05"/></svg>
 <div class="lbl" style="top:46.4px">Binary String</div>
 <div class="lbl" style="top:80.0px">Decimal String</div>
 <div class="tf" style="top:38.9px">121</div>
 <div class="tf" style="top:72.9px">Invalid format for binary string.&nbsp; Invalid character:</div>
 <div id="btn"></div><div id="btntxt">Convert to Decimal</div>
</div>
</body></html>
